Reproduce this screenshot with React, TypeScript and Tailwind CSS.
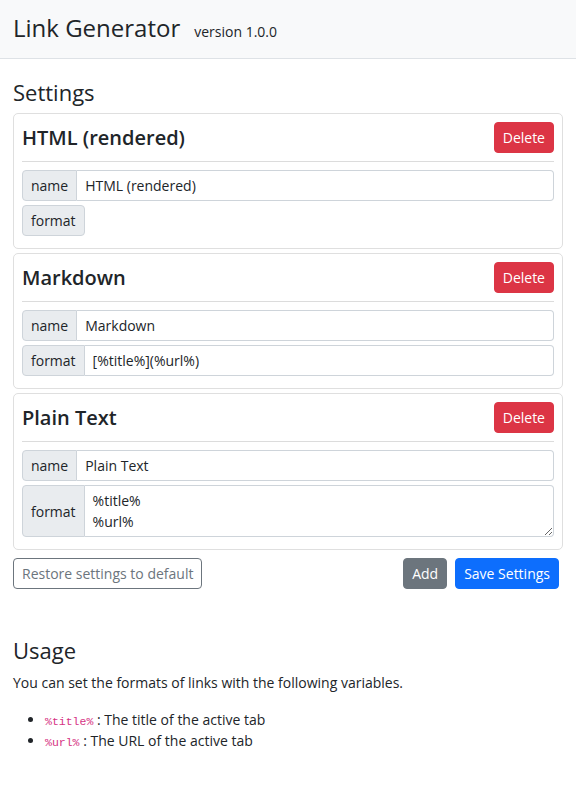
import React from 'react';

type Entry = {
  name: string;
  format: string | null;
  multiline?: boolean;
};

const entries: Entry[] = [
  { name: 'HTML (rendered)', format: null },
  { name: 'Markdown', format: '[%title%](%url%)' },
  { name: 'Plain Text', format: '%title%\n%url%', multiline: true },
];

const addon =
  'flex items-center px-2 py-1 bg-[#e9ecef] border border-[#ced4da] text-[14px] leading-[21px] text-[#212529]';
const field =
  'flex-1 min-w-0 px-2 py-1 border border-[#ced4da] border-l-0 rounded-r-[4px] text-[14px] leading-[21px] text-[#212529] bg-white outline-none';

const EntryCard: React.FC<{ entry: Entry }> = ({ entry }) => (
  <div className="border border-[#dfdfdf] rounded-[5px] p-2 mb-1">
    <div className="flex items-center justify-between">
      <h2 className="text-[20px] leading-[1.2] font-semibold text-[#212529]">{entry.name}</h2>
      <button className="bg-[#dc3545] text-white text-[14px] leading-[21px] px-2 py-1 rounded-[4px] border border-[#dc3545]">
        Delete
      </button>
    </div>
    <hr className="my-2 border-0 border-t border-[#dcdcdc]" />
    <div className="flex mb-1">
      <span className={`${addon} rounded-l-[4px]`}>name</span>
      <input className={field} defaultValue={entry.name} />
    </div>
    <div className="flex mb-1">
      {entry.format === null ? (
        <span className={`${addon} rounded-[4px]`}>format</span>
      ) : (
        <>
          <span className={`${addon} rounded-l-[4px]`}>format</span>
          {entry.multiline ? (
            <textarea className={`${field} block h-[52px]`} rows={2} defaultValue={entry.format} />
          ) : (
            <input className={field} defaultValue={entry.format} />
          )}
        </>
      )}
    </div>
  </div>
);

const codeCls = "text-[#d63384] font-['Liberation_Mono',monospace] text-[11.5px] leading-none";

export default function App() {
  return (
    <div className="min-h-screen bg-white text-[#212529] font-['Open_Sans',sans-serif] text-[14px] leading-[21px]">
      <header className="h-[59px] bg-[#f8f9fa] border-b border-[#dee2e6] px-[13px] pt-[14px]">
        <div className="flex items-baseline">
          <h1 className="text-[24px] leading-[1.2] font-normal">Link Generator</h1>
          <span className="ml-[14px] text-[14px]">version 1.0.0</span>
        </div>
      </header>

      <main className="px-[13px] pt-[20px]">
        <h2 className="text-[22px] leading-[1.2] mb-2">Settings</h2>
        {entries.map((e) => (
          <EntryCard key={e.name} entry={e} />
        ))}

        <div className="flex items-center justify-between mt-2">
          <button className="border border-[#6c757d] text-[#6c757d] text-[14px] leading-[21px] px-2 py-1 rounded-[4px] bg-white">
            Restore settings to default
          </button>
          <div className="flex gap-2 mr-1">
            <button className="bg-[#6c757d] border border-[#6c757d] text-white text-[14px] leading-[21px] px-2 py-1 rounded-[4px]">
              Add
            </button>
            <button className="bg-[#0d6efd] border border-[#0d6efd] text-white text-[14px] leading-[21px] px-2 py-1 rounded-[4px]">
              Save Settings
            </button>
          </div>
        </div>

        <h2 className="text-[22px] leading-[1.2] mt-[48px] mb-2">Usage</h2>
        <p className="mb-4">You can set the formats of links with the following variables.</p>
        <ul className="list-disc pl-8">
          <li>
            <code className={codeCls}>%title%</code>
            {' '}: The title of the active tab
          </li>
          <li>
            <code className={codeCls}>%url%</code>
            {' '}: The URL of the active tab
          </li>
        </ul>
      </main>
    </div>
  );
}
